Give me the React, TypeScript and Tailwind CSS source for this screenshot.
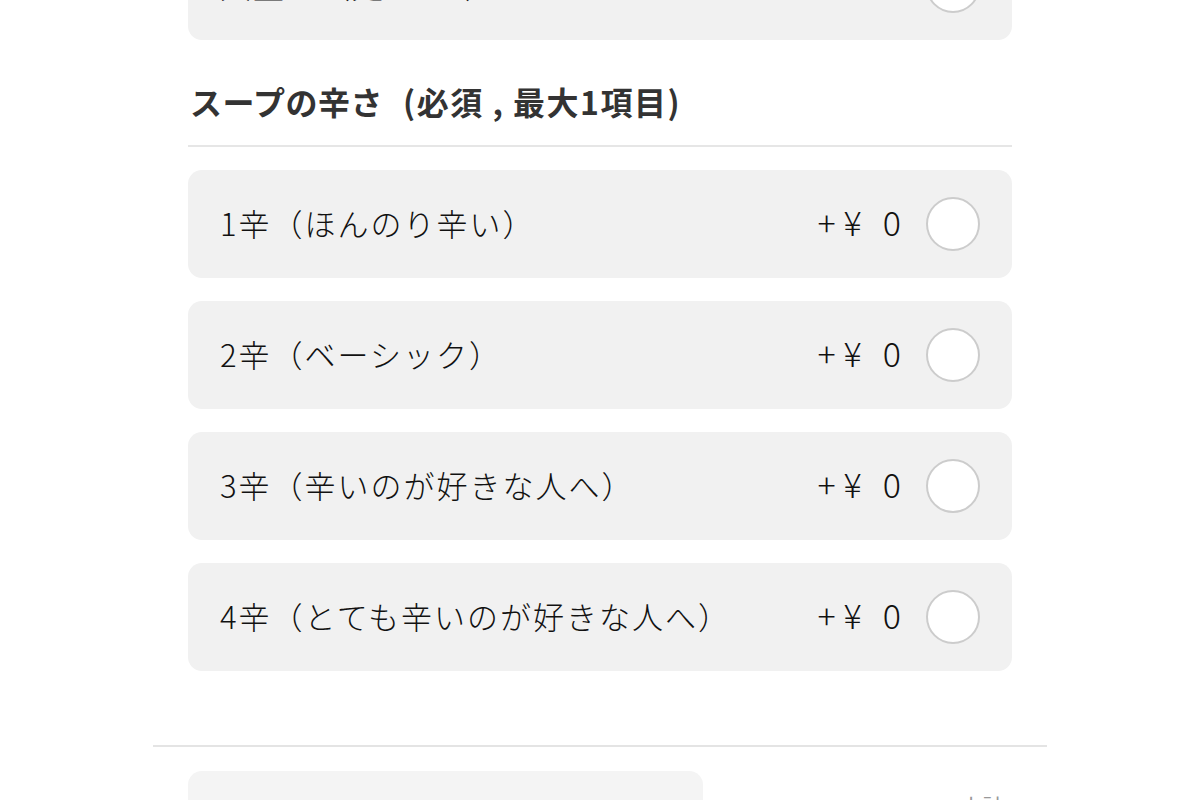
import React from 'react'

type Option = {
  label: string
  price: number
}

const OPTIONS: Option[] = [
  { label: '1辛（ほんのり辛い）', price: 0 },
  { label: '2辛（ベーシック）', price: 0 },
  { label: '3辛（辛いのが好きな人へ）', price: 0 },
  { label: '4辛（とても辛いのが好きな人へ）', price: 0 },
]

function OptionRow({ option }: { option: Option }) {
  return (
    <label className="flex h-[108px] items-center justify-between rounded-[14px] bg-[#f1f1f1] pl-8 pr-8">
      <span className="mb-[4px] text-[31px] font-light leading-none tracking-[2px] text-[#111]">{option.label}</span>
      <span className="flex items-center gap-[25px]">
        {/* price */}
        <span className="mb-[4px] flex items-baseline text-[34px] font-light leading-none text-[#111]">
          <span>+</span>
          <span className="ml-[8px]">¥</span>
          <span className="ml-[21px]">{option.price}</span>
        </span>
        <span className="h-[54px] w-[54px] rounded-full border-2 border-[#cccccc] bg-white" />
      </span>
    </label>
  )
}

export default function App() {
  return (
    <div
      className="h-[800px] overflow-hidden bg-white"
      style={{ fontFamily: '"Noto Sans CJK JP", "Noto Sans", sans-serif' }}
    >
      <div className="mx-auto -mt-[68px] w-[894px]">
        <div className="px-[35px]">
          {/* previous group, scrolled off */}
          <OptionRow option={{ label: '大盛り（麺1.5玉）', price: 0 }} />

          {/* soup spiciness */}
          <h2 className="mt-[45px] border-b-2 border-[#e6e6e6] pb-[28px] pl-[2px] text-[32px] font-bold leading-none tracking-[0.5px] text-[#333]">
            スープの辛さ<span className="ml-[20px] tracking-[1.5px]">(必須 , 最大1項目)</span>
          </h2>
          <div className="mt-[23px] flex flex-col gap-[23px]">
            {OPTIONS.map((o) => (
              <OptionRow key={o.label} option={o} />
            ))}
          </div>
        </div>

        <div className="mt-[74px] border-t-2 border-[#e4e4e4] px-[35px] pt-[24px]">
          <div className="flex items-start justify-between">
            <div className="h-[80px] w-[515px] rounded-[14px] bg-[#f4f4f4]" />
            <span className="mt-[18px] pr-[8px] text-[22px] text-[#999]">小計</span>
          </div>
        </div>
      </div>
    </div>
  )
}
